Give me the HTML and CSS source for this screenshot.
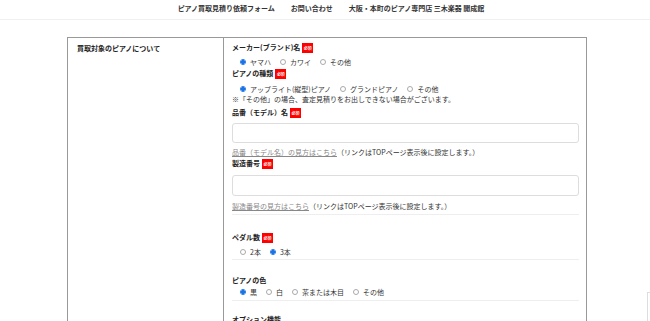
FILE: index.html
```html
<!DOCTYPE html>
<html lang="ja">
<head>
<meta charset="utf-8">
<title>ピアノ買取見積り依頼フォーム</title>
<link rel="stylesheet" href="styles.css">
</head>
<body>
<header class="header">
  <nav class="nav">
    <a class="nav-item">ピアノ買取見積り依頼フォーム</a>
    <a class="nav-item">お問い合わせ</a>
    <a class="nav-item">大阪・本町のピアノ専門店 三木楽器 開成館</a>
  </nav>
</header>
<main class="main">
  <div class="form-table">
    <div class="cell-head">買取対象のピアノについて</div>
    <div class="cell-body">
      <div class="label l1">メーカー(ブランド)名<span class="badge">必須</span></div>
      <div class="radios r1">
        <label class="opt"><input type="radio" name="maker" checked>ヤマハ</label>
        <label class="opt"><input type="radio" name="maker">カワイ</label>
        <label class="opt"><input type="radio" name="maker">その他</label>
      </div>
      <div class="label l2">ピアノの種類<span class="badge">必須</span></div>
      <div class="radios r2">
        <label class="opt"><input type="radio" name="type" checked>アップライト(縦型)ピアノ</label>
        <label class="opt"><input type="radio" name="type">グランドピアノ</label>
        <label class="opt"><input type="radio" name="type">その他</label>
      </div>
      <div class="note">※「その他」の場合、査定見積りをお出しできない場合がございます。</div>
      <div class="label l3">品番（モデル）名<span class="badge">必須</span></div>
      <input class="text-input in1" type="text">
      <div class="help h1"><a class="help-link">品番（モデル名）の見方はこちら</a>（リンクはTOPページ表示後に設定します。）</div>
      <div class="label l4">製造番号<span class="badge">必須</span></div>
      <input class="text-input in2" type="text">
      <div class="help h2"><a class="help-link">製造番号の見方はこちら</a>（リンクはTOPページ表示後に設定します。）</div>
      <div class="sep s1"></div>
      <div class="label l5">ペダル数<span class="badge">必須</span></div>
      <div class="radios r5">
        <label class="opt"><input type="radio" name="pedal">2本</label>
        <label class="opt"><input type="radio" name="pedal" checked>3本</label>
      </div>
      <div class="sep s2"></div>
      <div class="label l6">ピアノの色</div>
      <div class="radios r6">
        <label class="opt"><input type="radio" name="color" checked>黒</label>
        <label class="opt"><input type="radio" name="color">白</label>
        <label class="opt"><input type="radio" name="color">茶または木目</label>
        <label class="opt"><input type="radio" name="color">その他</label>
      </div>
      <div class="sep s3"></div>
      <div class="label l7">オプション機能</div>
      <div class="spacer"></div>
    </div>
  </div>
</main>
<div class="pagetop"></div>
</body>
</html>
```
FILE: styles.css
```css
* { box-sizing: border-box; }
html, body { margin: 0; padding: 0; background: #fff; }
body {
  font-family: "Noto Sans CJK JP", "Noto Sans", sans-serif;
  font-size: 7px;
  color: #222;
  overflow: hidden;
}
.header {
  height: 20px;
  border-bottom: 1px solid #f0f0f0;
  display: flex;
  justify-content: center;
}
.nav {
  display: flex;
  gap: 16px;
  height: 16px;
  align-items: center;
  margin-left: 12px;
  font-weight: bold;
}
.nav-item { color: #333; text-decoration: none; line-height: 1; }
.main { padding-top: 17px; }
.form-table {
  margin-left: 67px;
  width: 520px;
  border: 1px solid #999;
  display: grid;
  grid-template-columns: 156px 1fr;
}
.cell-head {
  border-right: 1px solid #999;
  padding: 5px 9px;
  font-weight: bold;
  line-height: 10px;
}
.cell-body {
  padding: 4px 6px 0 8px;
  display: flex;
  flex-direction: column;
}
.label {
  height: 11px;
  line-height: 11px;
  font-weight: bold;
  display: flex;
  align-items: center;
  gap: 2px;
  white-space: nowrap;
}
.badge {
  display: inline-flex;
  align-items: center;
  justify-content: center;
  width: 11px;
  height: 10px;
  background: #f00;
  color: #fff;
  font-size: 4px;
  font-weight: bold;
  line-height: 1;
}
.radios {
  height: 11px;
  display: flex;
  align-items: center;
  gap: 9px;
  padding-left: 8px;
  white-space: nowrap;
  color: #333;
}
.opt { display: flex; align-items: center; }
.opt input {
  appearance: none;
  -webkit-appearance: none;
  width: 6px;
  height: 6px;
  margin: 0 4px 0 0;
  border: 1px solid #aaa;
  border-radius: 50%;
  background: #fff;
}
.opt input:checked {
  border-color: #1a73e8;
  background: radial-gradient(circle, #1a73e8 0 1.6px, #fff 1.8px);
}
.note { height: 10px; line-height: 10px; color: #333; white-space: nowrap; }
.text-input {
  width: 347px;
  border: 1px solid #ddd;
  border-radius: 3px;
  background: #fff;
  padding: 0;
}
.in1 { height: 20px; margin-top: 5px; }
.in2 { height: 21px; margin-top: 6px; }
.help { height: 11px; line-height: 11px; color: #333; white-space: nowrap; }
.help-link { color: #888; text-decoration: underline; text-underline-offset: 1px; }
.sep { width: 347px; height: 1px; background: #eee; }
.r1 { margin-top: 3px; }
.l2 { margin-top: 1px; }
.r2 { margin-top: 4px; }
.l3 { margin-top: 3px; }
.h1 { margin-top: 4px; }
.h2 { margin-top: 5px; }
.s1 { margin-top: 2px; }
.l5 { margin-top: 17px; }
.r5 { margin-top: 3px; }
.s2 { margin-top: 2px; }
.l6 { margin-top: 15px; }
.s3 { margin-top: 3px; }
.l7 { margin-top: 13px; }
.spacer { height: 40px; }
.pagetop {
  position: fixed;
  left: 647px;
  top: 292px;
  width: 30px;
  height: 40px;
  border: 1px solid #ddd;
  background: #fff;
}
```
